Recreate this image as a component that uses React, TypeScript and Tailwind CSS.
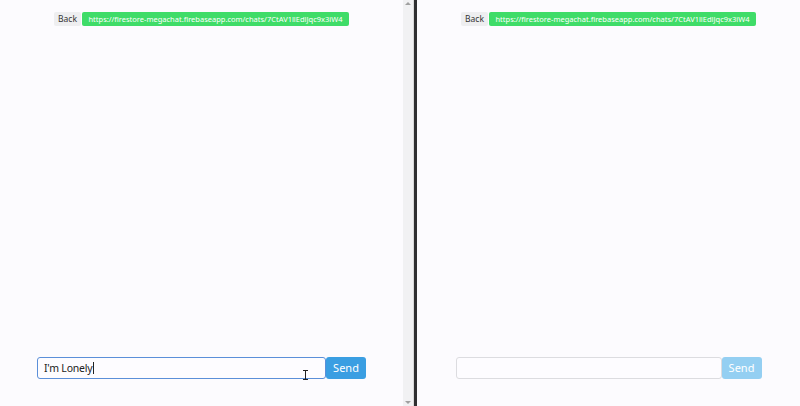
import { useState } from "react";

const chatUrl = "https://firestore-megachat.firebaseapp.com/chats/7CtAV1llEdlJqc9x3iW4";

export default function App() {
  return (
    <div
      className="flex h-[406px] w-[800px] overflow-hidden bg-[#fcfbfe]"
      style={{ fontFamily: '"Noto Sans", "Open Sans", sans-serif' }}
    >
      <ChatPane value="I'm Lonely" focused className="w-[403px]" />
      {/* scrollbar of left frame */}
      <div className="flex w-[10px] flex-col justify-between bg-[#f1f1f3]">
        <div className="mx-auto mt-[2px] h-0 w-0 border-x-[3px] border-b-[3px] border-x-transparent border-b-[#a0a0a0]" />
        <div className="mx-auto mb-[2px] h-0 w-0 border-x-[3px] border-t-[3px] border-x-transparent border-t-[#a0a0a0]" />
      </div>
      {/* divider */}
      <div className="w-[1px] bg-[#d8d8d8]" />
      <div className="w-[3px] bg-[#2f2f31]" />
      <ChatPane value="" className="flex-1" />
    </div>
  );
}

function ChatPane({
  value,
  focused,
  className,
}: {
  value: string;
  focused?: boolean;
  className?: string;
}) {
  const [text, setText] = useState(value);
  const empty = text.length === 0;

  return (
    <div className={"relative flex flex-col items-center justify-between pt-3 pb-[27px] " + className}>
      <div className="flex items-center">
        <button className="h-[14px] w-[27px] rounded-[2px] bg-[#eeeef0] text-center text-[8.5px] leading-[14px] text-[#333]">
          Back
        </button>
        <a className="ml-[1px] h-[14px] w-[267px] whitespace-nowrap rounded-[2px] bg-[#3fdc68] text-center text-[7.5px] leading-[14px] text-white">
          {chatUrl}
        </a>
      </div>

      <div className="flex items-center">
        <input
          value={text}
          onChange={(e) => setText(e.target.value)}
          className={
            "h-[22px] rounded-[3px] border bg-[#fdfcff] px-[6px] text-[10.5px] tracking-[-0.2px] text-[#222] outline-none " +
            (focused ? "w-[289px] border-[1.5px] border-[#5b8fd9]" : "w-[266px] border-[#dcdce0]")
          }
        />
        <button
          className={
            "h-[22px] w-[40px] rounded-[3px] text-[11px] text-white " +
            (empty ? "bg-[#94cff2]" : "bg-[#3a9ee2]")
          }
        >
          Send
        </button>
      </div>

      {focused && (
        <>
          {/* text caret */}
          <div className="absolute left-[93px] top-[362px] h-[12px] w-[1px] bg-[#222]" />
          {/* mouse i-beam */}
          <svg className="absolute left-[302px] top-[370px]" width="7" height="10" viewBox="0 0 7 10">
            <path d="M1 0.5h5M1 9.5h5M3.5 0.5v9" stroke="#222" strokeWidth="1" fill="none" />
          </svg>
        </>
      )}
    </div>
  );
}
